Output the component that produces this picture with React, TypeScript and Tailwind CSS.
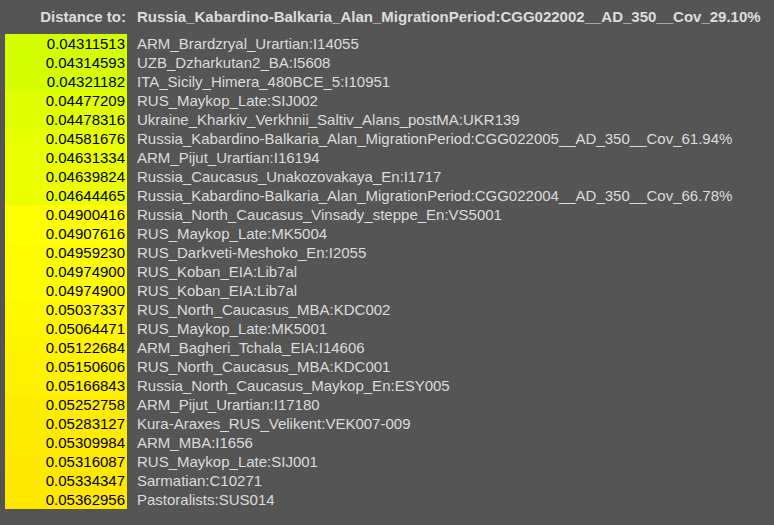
import React from "react";

const rows: [string, string][] = [
  ["0.04311513", "ARM_Brardzryal_Urartian:I14055"],
  ["0.04314593", "UZB_Dzharkutan2_BA:I5608"],
  ["0.04321182", "ITA_Sicily_Himera_480BCE_5:I10951"],
  ["0.04477209", "RUS_Maykop_Late:SIJ002"],
  ["0.04478316", "Ukraine_Kharkiv_Verkhnii_Saltiv_Alans_postMA:UKR139"],
  ["0.04581676", "Russia_Kabardino-Balkaria_Alan_MigrationPeriod:CGG022005__AD_350__Cov_61.94%"],
  ["0.04631334", "ARM_Pijut_Urartian:I16194"],
  ["0.04639824", "Russia_Caucasus_Unakozovakaya_En:I1717"],
  ["0.04644465", "Russia_Kabardino-Balkaria_Alan_MigrationPeriod:CGG022004__AD_350__Cov_66.78%"],
  ["0.04900416", "Russia_North_Caucasus_Vinsady_steppe_En:VS5001"],
  ["0.04907616", "RUS_Maykop_Late:MK5004"],
  ["0.04959230", "RUS_Darkveti-Meshoko_En:I2055"],
  ["0.04974900", "RUS_Koban_EIA:Lib7al"],
  ["0.04974900", "RUS_Koban_EIA:Lib7al"],
  ["0.05037337", "RUS_North_Caucasus_MBA:KDC002"],
  ["0.05064471", "RUS_Maykop_Late:MK5001"],
  ["0.05122684", "ARM_Bagheri_Tchala_EIA:I14606"],
  ["0.05150606", "RUS_North_Caucasus_MBA:KDC001"],
  ["0.05166843", "Russia_North_Caucasus_Maykop_En:ESY005"],
  ["0.05252758", "ARM_Pijut_Urartian:I17180"],
  ["0.05283127", "Kura-Araxes_RUS_Velikent:VEK007-009"],
  ["0.05309984", "ARM_MBA:I1656"],
  ["0.05316087", "RUS_Maykop_Late:SIJ001"],
  ["0.05334347", "Sarmatian:C10271"],
  ["0.05362956", "Pastoralists:SUS014"],
];

function colorFor(v: number): string {
  const lo = 0.04311513;
  const mid = 0.049;
  const hi = 0.05362956;
  if (v <= mid) {
    const t = (v - lo) / (mid - lo);
    const r = Math.round(212 + t * 43);
    return `rgb(${r},255,0)`;
  }
  const t = (v - mid) / (hi - mid);
  const g = Math.round(255 - t * 24);
  return `rgb(255,${g},0)`;
}

export default function App() {
  return (
    <div
      className="w-full h-[525px] bg-[#555555] overflow-hidden"
      style={{ fontFamily: '"Liberation Sans", Arial, sans-serif' }}
    >
      <div className="pt-[6px] pl-[5px]">
        <div className="flex h-[20px] items-center text-[15px] leading-none font-bold text-[#dddddd]">
          <div className="w-[122px] text-right pr-[1px]">Distance to:</div>
          <div className="pl-[10px] whitespace-nowrap">
            Russia_Kabardino-Balkaria_Alan_MigrationPeriod:CGG022002__AD_350__Cov_29.10%
          </div>
        </div>
        <div className="mt-[8px] flex flex-col">
          {rows.map(([v, n], i) => (
            <div key={i} className="flex h-[19px] items-center text-[15px] leading-none">
              <div
                className="w-[122px] h-full flex items-center justify-end pr-[2px] text-black"
                style={{ backgroundColor: colorFor(parseFloat(v)) }}
              >
                {v}
              </div>
              <div className="pl-[10px] text-[#dcdcdc] whitespace-nowrap">{n}</div>
            </div>
          ))}
        </div>
      </div>
    </div>
  );
}
